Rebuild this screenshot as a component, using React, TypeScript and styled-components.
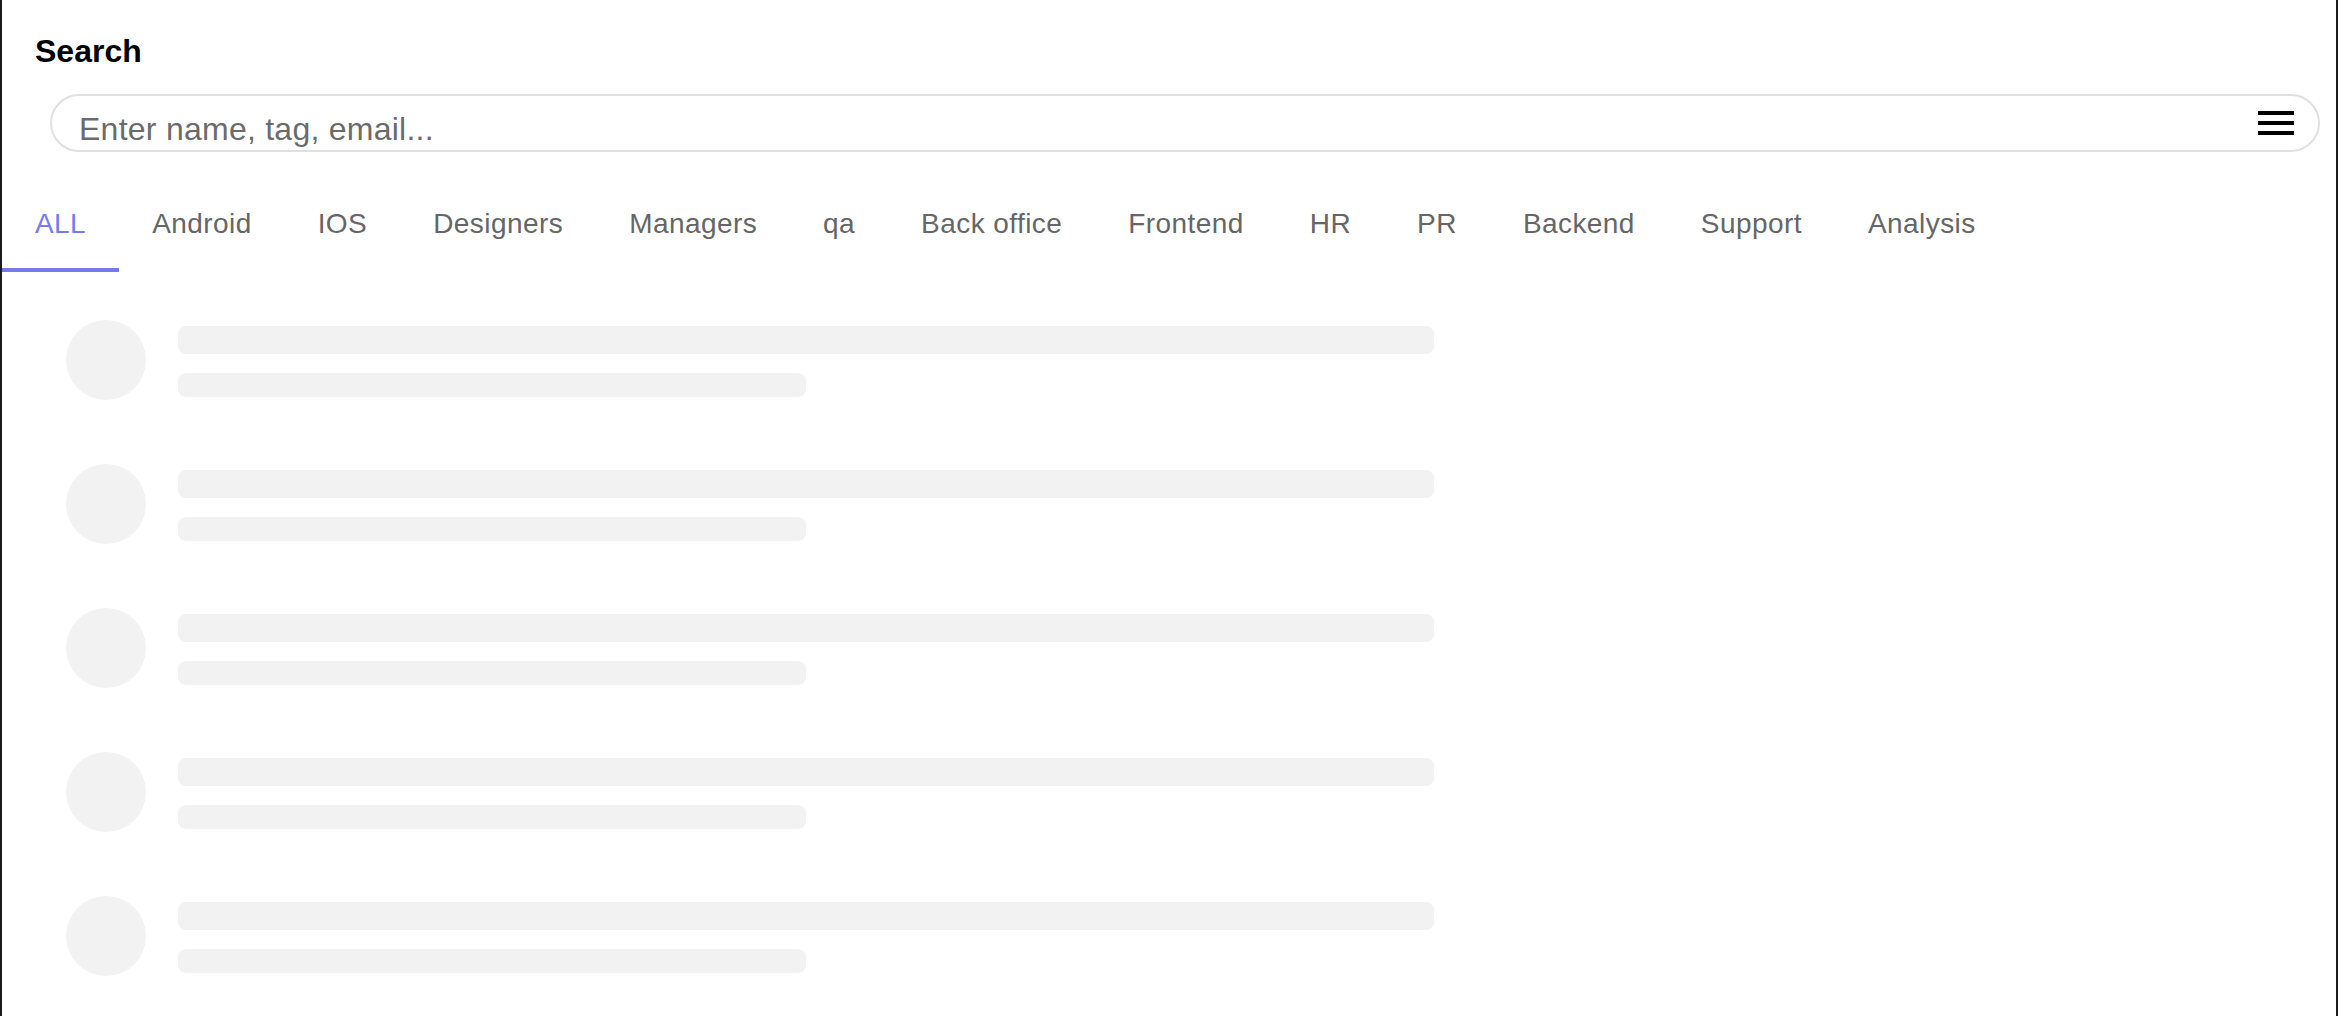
import React from "react";
import styled, { createGlobalStyle } from "styled-components";

const GlobalStyle = createGlobalStyle`
  html, body {
    margin: 0;
    padding: 0;
    background: #1b1b1b;
  }
  body {
    font-family: "Liberation Sans", Arial, Helvetica, sans-serif;
  }
  * { box-sizing: border-box; }
`;

const Frame = styled.div`
  margin: 0 2px;
  min-height: 1016px;
  background: #ffffff;
  overflow: hidden;
`;

const Header = styled.header`
  padding: 33px 16px 0 33px;
`;

const Title = styled.h1`
  margin: 0;
  font-size: 32px;
  font-weight: 700;
  line-height: normal;
  color: #000000;
`;

const SearchBox = styled.div`
  margin: 24px 0 0 15px;
  height: 58px;
  border: 2px solid #e0e0e0;
  border-radius: 29px;
  display: flex;
  align-items: center;
  padding: 0 24px 0 25px;
`;

const SearchInput = styled.input`
  flex: 1;
  height: 54px;
  border: none;
  outline: none;
  background: transparent;
  padding: 12px 0 0 2px;
  font-family: "Liberation Sans", Arial, sans-serif;
  font-size: 32px;
  letter-spacing: 0.25px;
  color: #222;
  &::placeholder {
    color: #6b6b6b;
    opacity: 1;
  }
`;

const MenuButton = styled.button`
  border: none;
  background: transparent;
  padding: 0;
  width: 36px;
  height: 24px;
  display: flex;
  flex-direction: column;
  justify-content: space-between;
  cursor: pointer;
`;

const MenuBar = styled.span`
  display: block;
  width: 36px;
  height: 4px;
  background: #000;
`;

const Tabs = styled.nav`
  margin-top: 24px;
  display: flex;
`;

const Tab = styled.div<{ $active?: boolean }>`
  height: 96px;
  padding: 4px 33px 0;
  display: flex;
  align-items: center;
  border-bottom: 4px solid ${(p) => (p.$active ? "#7879f1" : "transparent")};
  font-size: 28px;
  letter-spacing: 0.43px;
  line-height: normal;
  white-space: nowrap;
  color: ${(p) => (p.$active ? "#7879f1" : "#666666")};
  cursor: pointer;
`;

const List = styled.div`
  padding: 48px 0 0 64px;
  display: flex;
  flex-direction: column;
  gap: 64px;
`;

const Row = styled.div`
  display: flex;
  align-items: center;
  gap: 32px;
`;

const Avatar = styled.div`
  width: 80px;
  height: 80px;
  border-radius: 50%;
  background: #f2f2f2;
  flex-shrink: 0;
`;

const Lines = styled.div`
  display: flex;
  flex-direction: column;
  gap: 19px;
  padding-top: 2px;
`;

const Line = styled.div<{ $w: number; $h: number }>`
  width: ${(p) => p.$w}px;
  height: ${(p) => p.$h}px;
  border-radius: 8px;
  background: #f2f2f2;
`;

const tabs = [
  "ALL",
  "Android",
  "IOS",
  "Designers",
  "Managers",
  "qa",
  "Back office",
  "Frontend",
  "HR",
  "PR",
  "Backend",
  "Support",
  "Analysis",
];

export default function App() {
  return (
    <>
      <GlobalStyle />
      <Frame>
        <Header>
          <Title>Search</Title>
          <SearchBox>
            <SearchInput placeholder="Enter name, tag, email..." />
            <MenuButton aria-label="menu">
              <MenuBar />
              <MenuBar />
              <MenuBar />
            </MenuButton>
          </SearchBox>
        </Header>
        <Tabs>
          {tabs.map((t, i) => (
            <Tab key={t} $active={i === 0}>
              {t}
            </Tab>
          ))}
        </Tabs>
        <List>
          {[0, 1, 2, 3, 4].map((i) => (
            <Row key={i}>
              <Avatar />
              <Lines>
                <Line $w={1256} $h={28} />
                <Line $w={628} $h={24} />
              </Lines>
            </Row>
          ))}
        </List>
      </Frame>
    </>
  );
}
